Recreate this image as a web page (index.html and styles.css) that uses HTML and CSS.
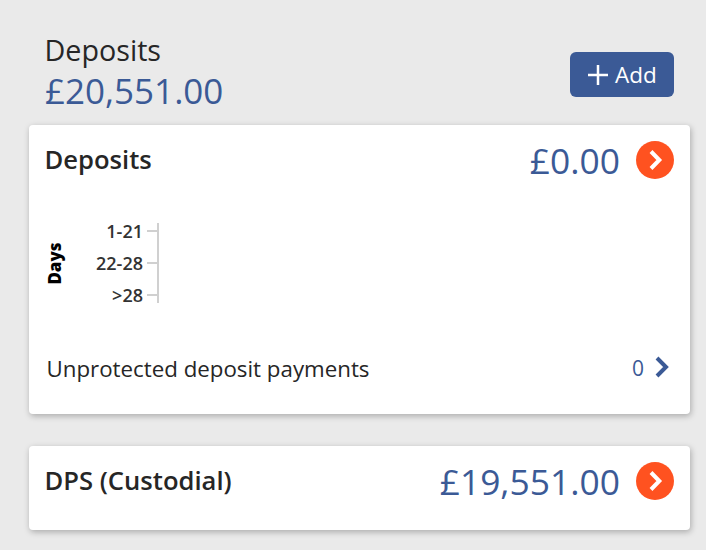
FILE: index.html
```html
<!DOCTYPE html>
<html lang="en">
<head>
<meta charset="utf-8">
<title>Deposits</title>
<link rel="stylesheet" href="styles.css">
</head>
<body>
<main class="page">
  <header class="top">
    <div>
      <h1 class="top-title">Deposits</h1>
      <div class="top-amount">£20,551.00</div>
    </div>
    <button class="add" type="button">
      <svg class="add-icon" viewBox="0 0 20 20" aria-hidden="true"><path d="M10 0v20M0 10h20"/></svg>
      <span>Add</span>
    </button>
  </header>

  <section class="card card-main">
    <div class="card-head">
      <h2 class="card-title">Deposits</h2>
      <div class="card-value">
        <span class="amount">£0.00</span>
        <span class="go"><svg viewBox="0 0 38 38" aria-hidden="true"><path d="M15 10.500 23.300 19 15 27.500"/></svg></span>
      </div>
    </div>
    <div class="chart">
      <div class="axis-name"><span>Days</span></div>
      <div class="labels">
        <div class="label">1-21</div>
        <div class="label">22-28</div>
        <div class="label">&gt;28</div>
      </div>
      <div class="axis">
        <i class="tick"></i><i class="tick"></i><i class="tick"></i>
      </div>
    </div>
    <div class="row">
      <span>Unprotected deposit payments</span>
      <span class="row-end">
        <span class="count">0</span>
        <svg class="chev" viewBox="0 0 16 24" aria-hidden="true"><path d="M3 3 12 12 3 21"/></svg>
      </span>
    </div>
  </section>

  <section class="card card-second">
    <div class="card-head">
      <h2 class="card-title">DPS (Custodial)</h2>
      <div class="card-value">
        <span class="amount">£19,551.00</span>
        <span class="go"><svg viewBox="0 0 38 38" aria-hidden="true"><path d="M15 10.500 23.300 19 15 27.500"/></svg></span>
      </div>
    </div>
  </section>
</main>
</body>
</html>
```
FILE: styles.css
```css
* { box-sizing: border-box; }
html, body { margin: 0; height: 100%; }
body {
  background: #eaeaea;
  font-family: "Open Sans", "Liberation Sans", sans-serif;
  color: #262626;
  overflow: hidden;
}
.page { padding: 32px 16px 0 29px; }
.top {
  display: flex;
  justify-content: space-between;
  align-items: flex-start;
  padding: 0 0 0 16px;
  height: 93px;
}
.top-title { margin: -1px 0 0 -0.500px; font-size: 28.700px; line-height: 38px; font-weight: 400; }
.top-amount { font-size: 35px; line-height: 42px; margin-top: 1px; color: #3b5a96; }
.add {
  display: flex;
  align-items: center;
  justify-content: center;
  gap: 7px;
  width: 104px;
  height: 45px;
  margin: 20px 16px 0 0;
  padding: 0 0 0 1px;
  border: 0;
  border-radius: 6px;
  background: #3b5a96;
  color: #fff;
  font: 400 22.500px "Open Sans", sans-serif;
}
.add-icon { width: 20px; height: 20px; fill: none; stroke: #fff; stroke-width: 2.500; }
.card {
  background: #fff;
  border-radius: 4px;
  box-shadow: 1px 2px 6px rgba(0,0,0,.28);
  padding: 16px 16px 0;
}
.card-main { height: 289px; }
.card-second { height: 84px; margin-top: 32px; }
.card-head { display: flex; justify-content: space-between; align-items: center; height: 38px; }
.card-title { margin: -2px 0 0 -0.500px; font-size: 25.600px; font-weight: 600; }
.card-value { display: flex; align-items: center; gap: 16px; }
.amount { font-size: 35.400px; margin-top: -1px; color: #3b5a96; }
.go { display: block; width: 38px; height: 38px; border-radius: 50%; background: #ff5220; }
.go svg { display: block; width: 38px; height: 38px; fill: none; stroke: #fff; stroke-width: 4; }
.chart { display: flex; height: 80px; margin-top: 44px; }
.axis-name { width: 20px; margin-left: -1px; margin-right: 1px; display: flex; align-items: center; justify-content: center; }
.axis-name span { transform: rotate(-90deg); font-size: 17px; font-weight: 800; color: #000; white-space: nowrap; }
.labels { width: 78px; margin-top: -8px; display: flex; flex-direction: column; }
.label { text-align: right; font-size: 18px; line-height: 32px; height: 32px; font-weight: 600; color: #333; }
.axis { width: 12px; margin-left: 4px; padding-top: 7px; border-right: 2px solid #d0d0d0; display: flex; flex-direction: column; gap: 30px; align-items: flex-start; }
.tick { display: block; width: 10px; height: 2px; background: #d0d0d0; }
.row { display: flex; justify-content: space-between; align-items: center; margin-top: 50px; padding: 0 4px 0 1.500px; font-size: 22.300px; }
.row-end { display: flex; align-items: center; gap: 10px; }
.count { font-size: 21px; margin-top: -2px; color: #3b5a96; }
.chev { width: 16px; height: 24px; margin-top: -3px; fill: none; stroke: #3b5a96; stroke-width: 4; }
```
